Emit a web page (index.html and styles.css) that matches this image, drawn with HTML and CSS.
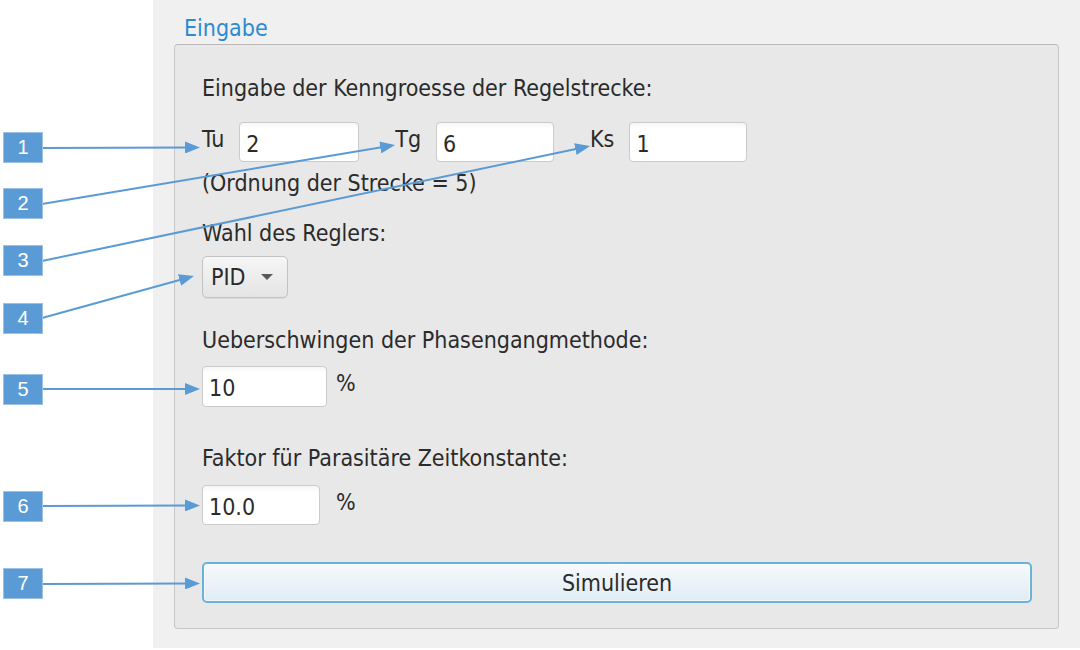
FILE: index.html
```html
<!DOCTYPE html>
<html lang="de">
<head>
<meta charset="utf-8">
<title>Eingabe</title>
<link rel="stylesheet" href="styles.css">
</head>
<body>
<div class="page">
  <div class="gutter"></div>
  <main class="app">
    <div class="group-title">Eingabe</div>
    <section class="panel">
      <p class="text heading">Eingabe der Kenngroesse der Regelstrecke:</p>
      <div class="param-row">
        <label class="param"><span class="param-label">Tu</span><input class="field field-tu" value="2"></label>
        <label class="param"><span class="param-label">Tg</span><input class="field field-tg" value="6"></label>
        <label class="param"><span class="param-label">Ks</span><input class="field field-ks" value="1"></label>
      </div>
      <p class="text note">(Ordnung der Strecke = 5)</p>
      <p class="text heading-regler">Wahl des Reglers:</p>
      <div class="combo"><span class="combo-value">PID</span><span class="combo-arrow"></span></div>
      <p class="text heading-ueber">Ueberschwingen der Phasengangmethode:</p>
      <div class="pct-row pct-row-ueber"><input class="field field-ueber" value="10"><span class="pct pct-ueber">%</span></div>
      <p class="text heading-faktor">Faktor für Parasitäre Zeitkonstante:</p>
      <div class="pct-row pct-row-faktor"><input class="field field-faktor" value="10.0"><span class="pct pct-faktor">%</span></div>
      <button class="simulate" type="button">Simulieren</button>
    </section>
  </main>
</div>

<div class="annotations">
  <svg class="arrows" width="1080" height="650" viewBox="0 0 1080 650" xmlns="http://www.w3.org/2000/svg">
    <defs>
      <marker id="head" viewBox="0 0 15 12" refX="3" refY="6" markerWidth="15" markerHeight="12" markerUnits="userSpaceOnUse" orient="auto">
        <path d="M0,0 L15,6 L0,12 z" fill="#5b9bd5"/>
      </marker>
    </defs>
    <g stroke="#5b9bd5" stroke-width="2" fill="none" marker-end="url(#head)">
      <line x1="42" y1="148" x2="188" y2="147.5"/>
      <line x1="42" y1="204" x2="383.2" y2="147"/>
      <line x1="42" y1="261" x2="578.3" y2="148.5"/>
      <line x1="42" y1="318" x2="182.4" y2="279.2"/>
      <line x1="42" y1="389" x2="188" y2="389"/>
      <line x1="42" y1="506" x2="188" y2="505.5"/>
      <line x1="42" y1="584" x2="188" y2="583.5"/>
    </g>
  </svg>
  <div class="callout c1">1</div>
  <div class="callout c2">2</div>
  <div class="callout c3">3</div>
  <div class="callout c4">4</div>
  <div class="callout c5">5</div>
  <div class="callout c6">6</div>
  <div class="callout c7">7</div>
</div>
</body>
</html>
```

FILE: styles.css
```css
html, body {
  margin: 0;
  padding: 0;
  background: #ffffff;
}

body {
  width: 1080px;
  height: 650px;
  position: relative;
  overflow: hidden;
  font-family: "DejaVu Sans Condensed", "DejaVu Sans", sans-serif;
  font-stretch: condensed;
  font-size: 23px;
  color: #2b2b2b;
}

.page {
  display: flex;
  height: 648px;
}

.gutter {
  width: 153px;
  flex: none;
}

.app {
  flex: 1;
  background: #f0f0f0;
  padding: 15px 21px 0 21px;
}

.group-title {
  line-height: 26px;
  height: 26px;
  margin: 0 0 3px 10px;
  color: #2a8bd2;
}

.panel {
  background: #e8e8e8;
  border: 1px solid #c6c6c6;
  border-top-color: #b9b9b9;
  border-radius: 4px;
  padding: 30px 26px 25px 27px;
  display: flex;
  flex-direction: column;
  align-items: flex-start;
}

.text {
  margin: 0;
  line-height: 26px;
  white-space: nowrap;
}

.param-row {
  display: flex;
  align-items: flex-start;
  gap: 36px;
  margin-top: 21px;
}

.param {
  display: flex;
  align-items: flex-start;
}

.param-label {
  line-height: 26px;
  margin-top: 4px;
  margin-right: 15px;
}

.field {
  -webkit-appearance: none;
  appearance: none;
  box-sizing: border-box;
  height: 40px;
  margin: 0;
  padding: 3px 6px 0 6px;
  font: inherit;
  color: #2b2b2b;
  background: linear-gradient(#f6f6f6, #ffffff 6px);
  border: 1px solid #cbcbcb;
  border-radius: 4px;
  outline: none;
}

.field-tu { width: 120px; }
.field-tg { width: 118px; }
.field-ks { width: 118px; }

.note { margin-top: 8px; }
.heading-regler { margin-top: 24px; }

.combo {
  box-sizing: border-box;
  margin-top: 10px;
  height: 42px;
  width: 86px;
  display: flex;
  align-items: center;
  padding: 0 0 0 8px;
  border: 1px solid #c2c2c2;
  border-radius: 5px;
  background: linear-gradient(#f6f6f6, #e4e4e4);
  box-shadow: 0 1px 0 rgba(0, 0, 0, 0.06);
}

.combo-value {
  line-height: 26px;
}

.combo-arrow {
  width: 0;
  height: 0;
  margin-left: 15px;
  border-left: 6px solid transparent;
  border-right: 6px solid transparent;
  border-top: 6px solid #5a5a5a;
}

.heading-ueber { margin-top: 29px; }

.pct-row {
  display: flex;
  align-items: flex-start;
}

.pct-row-ueber { margin-top: 13px; }
.pct-row-faktor { margin-top: 14px; }

.field-ueber { width: 125px; height: 41px; }
.field-faktor { width: 118px; }

.pct {
  line-height: 26px;
  margin-top: 4px;
}

.pct-ueber { margin-left: 9px; }
.pct-faktor { margin-left: 16px; }

.heading-faktor { margin-top: 38px; }

.simulate {
  margin-top: 37px;
  align-self: stretch;
  box-sizing: border-box;
  height: 41px;
  font: inherit;
  color: #2b2b2b;
  border: 2px solid #68b3da;
  border-radius: 5px;
  background: linear-gradient(#f5fafd, #e0ecf4);
  box-shadow: inset 0 0 0 1px rgba(255, 255, 255, 0.6);
  padding: 0;
}

.annotations {
  position: absolute;
  left: 0;
  top: 0;
  width: 1080px;
  height: 650px;
  pointer-events: none;
}

.arrows {
  position: absolute;
  left: 0;
  top: 0;
}

.callout {
  position: absolute;
  left: 3px;
  box-sizing: border-box;
  width: 40px;
  height: 31px;
  background: #5b9bd5;
  border: 1px solid #9cc0e6;
  color: #ffffff;
  font-family: "Liberation Sans", Arial, sans-serif;
  font-stretch: normal;
  font-size: 20px;
  line-height: 29px;
  text-align: center;
}

.c1 { top: 132px; }
.c2 { top: 188px; }
.c3 { top: 245px; }
.c4 { top: 303px; }
.c5 { top: 374px; }
.c6 { top: 491px; }
.c7 { top: 568px; }
```
